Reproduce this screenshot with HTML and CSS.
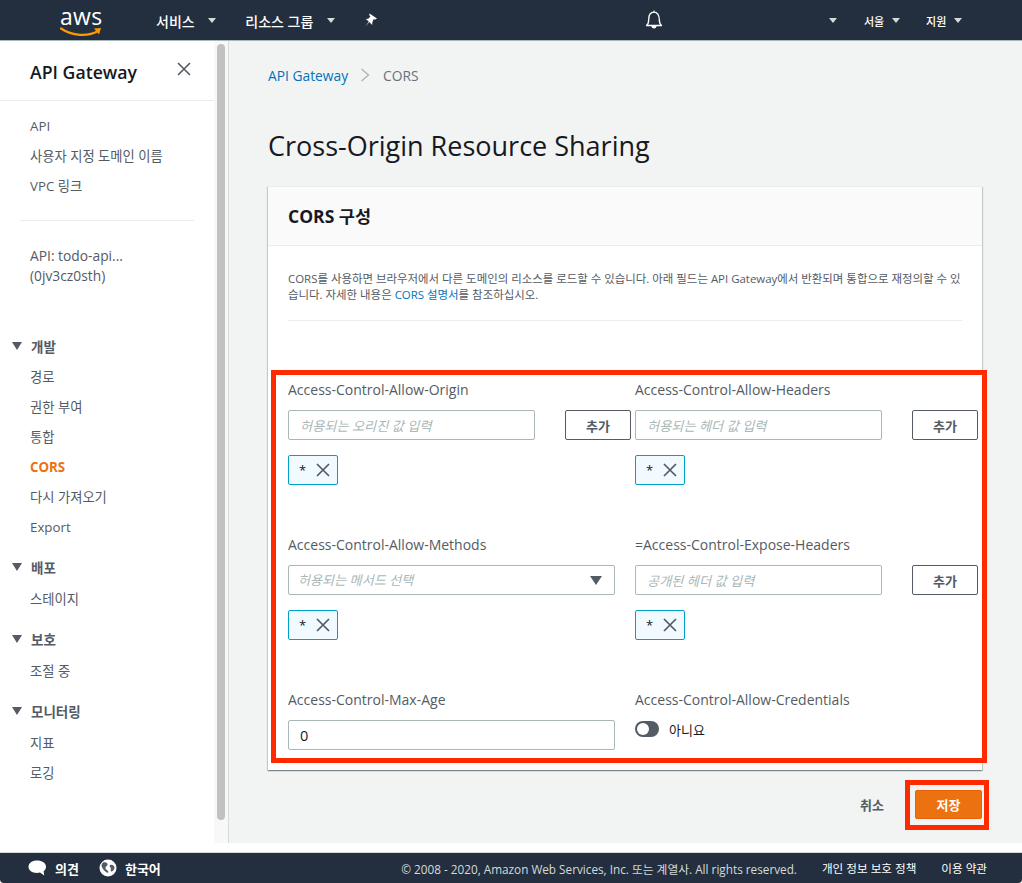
FILE: index.html
```html
<!DOCTYPE html>
<html lang="ko">

<head>
    <meta charset="utf-8">
    <title>API Gateway - CORS</title>
    <link rel="stylesheet" href="styles.css">
</head>

<body>
    <header class="topbar">
        <a class="logo">
            <span class="logo-text">aws</span>
            <svg class="logo-smile" width="42" height="10" viewBox="0 0 42 10">
                <path d="M1 1.5C12 9 28 10 38 4" fill="none" stroke="#f90" stroke-width="2.2" stroke-linecap="round" />
                <path d="M34 1.5L41 1 39 7.5Z" fill="#f90" />
            </svg>
        </a>
        <span class="top-item top-services">서비스 <i class="caret"></i></span>
        <span class="top-item top-groups">리소스 그룹 <i class="caret"></i></span>
        <svg class="pin" width="14" height="14" viewBox="0 0 14 14">
            <path d="M5.5 0.5L13 5.5 11.3 6.6 9.6 6.2 8.3 9.6 8.2 12 5.3 9 1.5 13.5 4.8 8.6 1.8 6 4.3 5.8 6.4 3.6 5.2 2Z" fill="#fff" />
        </svg>
        <svg class="bell" width="18" height="20" viewBox="0 0 18 20">
            <path d="M1.5 15.5C3.5 14 3.7 12 3.7 9.5 3.7 5.5 5.5 2.2 9 2.2S14.3 5.5 14.3 9.5C14.3 12 14.5 14 16.5 15.5Z" fill="none" stroke="#fff" stroke-width="1.3" stroke-linejoin="round" />
            <path d="M9 0.5V2.2M6.8 16.5C7 18.5 11 18.5 11.2 16.5Z" fill="#fff" stroke="#fff" stroke-width="1" />
        </svg>
        <i class="caret caret-user"></i>
        <span class="top-item top-region">서울 <i class="caret"></i></span>
        <span class="top-item top-support">지원 <i class="caret"></i></span>
    </header>

    <div class="middle">
        <nav class="sidebar">
            <div class="side-head">
                <span class="side-title">API Gateway</span>
                <svg class="side-close" width="14" height="14" viewBox="0 0 14 14">
                    <path d="M1 1L13 13M13 1L1 13" stroke="#545b64" stroke-width="1.6" fill="none" />
                </svg>
            </div>
            <ul class="side-list side-first">
                <li>API</li>
                <li>사용자 지정 도메인 이름</li>
                <li>VPC 링크</li>
            </ul>
            <div class="side-divider"></div>
            <p class="side-api">API: todo-api...<br>(0jv3cz0sth)</p>

            <h3 class="side-section side-section-dev"><i class="tri"></i>개발</h3>
            <ul class="side-list side-list-dev">
                <li>경로</li>
                <li>권한 부여</li>
                <li>통합</li>
                <li class="active">CORS</li>
                <li>다시 가져오기</li>
                <li>Export</li>
            </ul>
            <h3 class="side-section"><i class="tri"></i>배포</h3>
            <ul class="side-list">
                <li>스테이지</li>
            </ul>
            <h3 class="side-section"><i class="tri"></i>보호</h3>
            <ul class="side-list">
                <li>조절 중</li>
            </ul>
            <h3 class="side-section"><i class="tri"></i>모니터링</h3>
            <ul class="side-list">
                <li>지표</li>
                <li>로깅</li>
            </ul>
        </nav>
        <div class="scroll-track">
            <div class="scroll-thumb"></div>
        </div>

        <main class="content">
            <div class="crumbs">
                <a class="link">API Gateway</a>
                <svg class="crumb-sep" width="10" height="14" viewBox="0 0 10 14">
                    <path d="M1.5 1L8.5 7 1.5 13" fill="none" stroke="#aab7b8" stroke-width="1.4" />
                </svg>
                <span>CORS</span>
            </div>
            <h1 class="page-title">Cross-Origin Resource Sharing</h1>

            <section class="card">
                <div class="card-head">CORS 구성</div>
                <div class="card-body">
                    <p class="desc">CORS를 사용하면 브라우저에서 다른 도메인의 리소스를 로드할 수 있습니다. 아래 필드는 API Gateway에서 반환되며 통합으로 재정의할 수 있습니다. 자세한 내용은 <a class="link">CORS 설명서</a>를 참조하십시오.</p>
                    <div class="rule"></div>

                    <div class="form-grid">
                        <div class="field">
                            <label>Access-Control-Allow-Origin</label>
                            <div class="input-row">
                                <input class="text-input" type="text" placeholder="허용되는 오리진 값 입력">
                                <button class="add-btn">추가</button>
                            </div>
                            <span class="tag">* <svg width="14" height="14" viewBox="0 0 14 14"><path d="M1 1L13 13M13 1L1 13" stroke="#545b64" stroke-width="1.7" fill="none" /></svg></span>
                        </div>
                        <div class="field">
                            <label>Access-Control-Allow-Headers</label>
                            <div class="input-row">
                                <input class="text-input" type="text" placeholder="허용되는 헤더 값 입력">
                                <button class="add-btn">추가</button>
                            </div>
                            <span class="tag">* <svg width="14" height="14" viewBox="0 0 14 14"><path d="M1 1L13 13M13 1L1 13" stroke="#545b64" stroke-width="1.7" fill="none" /></svg></span>
                        </div>
                        <div class="field">
                            <label>Access-Control-Allow-Methods</label>
                            <div class="input-row">
                                <div class="select-box">허용되는 메서드 선택<i class="select-tri"></i></div>
                            </div>
                            <span class="tag">* <svg width="14" height="14" viewBox="0 0 14 14"><path d="M1 1L13 13M13 1L1 13" stroke="#545b64" stroke-width="1.7" fill="none" /></svg></span>
                        </div>
                        <div class="field">
                            <label>=Access-Control-Expose-Headers</label>
                            <div class="input-row">
                                <input class="text-input" type="text" placeholder="공개된 헤더 값 입력">
                                <button class="add-btn">추가</button>
                            </div>
                            <span class="tag">* <svg width="14" height="14" viewBox="0 0 14 14"><path d="M1 1L13 13M13 1L1 13" stroke="#545b64" stroke-width="1.7" fill="none" /></svg></span>
                        </div>
                        <div class="field field-last">
                            <label>Access-Control-Max-Age</label>
                            <div class="input-row">
                                <input class="text-input wide" type="text" value="0">
                            </div>
                        </div>
                        <div class="field field-last">
                            <label>Access-Control-Allow-Credentials</label>
                            <div class="input-row toggle-row">
                                <span class="toggle"></span>
                                <span>아니요</span>
                            </div>
                        </div>
                    </div>
                </div>
            </section>

            <div class="actions">
                <a class="cancel">취소</a>
                <button class="save-btn">저장</button>
            </div>

            <!-- red annotation boxes from the screenshot -->
            <div class="mark mark-form"></div>
            <div class="mark mark-save"></div>
        </main>
    </div>

    <footer class="footer">
        <svg class="foot-icon" width="19" height="16" viewBox="0 0 19 16">
            <path d="M9 0.5C14 0.5 18 3 18 6.7 18 9 16.8 10.5 15.6 11.3L16.3 15.5 12 12.6C11 12.8 10 12.9 9 12.9 4 12.9 0.5 10.3 0.5 6.7S4 0.5 9 0.5Z" fill="#fff" />
        </svg>
        <span class="foot-strong">의견</span>
        <svg class="foot-icon foot-globe" width="18" height="18" viewBox="0 0 18 18">
            <circle cx="9" cy="9" r="8.5" fill="#fff" />
            <path d="M4 3.5C6 3 8 3.5 8.5 5 9 7 6.5 7 6.5 9 6.5 11 9 11 9.5 13 9 14 8 14 7 13 5 11.5 3 9 2.5 7 2.5 5.5 3 4.5 4 3.5ZM11 6C13 5 15.5 6.5 15.5 8.5 15.5 11 13 13 12 12.5 11 11.5 12.5 9.5 11.5 8.5 10.5 7.5 10.5 6.5 11 6Z" fill="#545b64" />
        </svg>
        <span class="foot-strong">한국어</span>
        <span class="foot-copy">© 2008 - 2020, Amazon Web Services, Inc. 또는 계열사. All rights reserved.</span>
        <span class="foot-link">개인 정보 보호 정책</span>
        <span class="foot-link foot-terms">이용 약관</span>
    </footer>
</body>

</html>
```

FILE: styles.css
```css
* {
    box-sizing: border-box;
}

html,
body {
    margin: 0;
    height: 100%;
}

body {
    display: flex;
    flex-direction: column;
    height: 883px;
    overflow: hidden;
    background: #fff;
    color: #545b64;
    font-family: "Open Sans", "Noto Sans CJK KR", sans-serif;
    font-size: 14px;
}

/* top bar */
.topbar {
    display: flex;
    align-items: center;
    flex: 0 0 41px;
    height: 41px;
    background: #232f3e;
    border-bottom: 1px solid #aab7b8;
    color: #fff;
}

.logo {
    position: relative;
    width: 42px;
    height: 33px;
    margin-left: 60px;
}

.logo-text {
    display: block;
    font-size: 23px;
    line-height: 24px;
    text-align: center;
    letter-spacing: 0.3px;
}

.logo-smile {
    position: absolute;
    left: 0;
    top: 23px;
}

.top-item {
    display: flex;
    align-items: center;
    margin-top: 1px;
    font-weight: 500;
    white-space: pre;
}

.top-services {
    margin-left: 54px;
    font-size: 14px;
}

.top-groups {
    margin-left: 29px;
    font-size: 14px;
}

.caret {
    display: inline-block;
    width: 0;
    height: 0;
    margin-left: 10px;
    border-left: 4px solid transparent;
    border-right: 4px solid transparent;
    border-top: 5px solid #d5dbdb;
}

.pin {
    margin-left: 29px;
}

.bell {
    margin-left: 267px;
}

.caret-user {
    margin-left: 166px;
}

.top-region {
    margin-left: 27px;
    font-size: 11px;
}

.top-support {
    margin-left: 26px;
    font-size: 11px;
}

.top-region .caret,
.top-support .caret {
    margin-left: 5px;
}

/* middle row */
.middle {
    display: flex;
    flex: 0 0 802px;
    height: 802px;
}

.sidebar {
    flex: 0 0 214px;
    background: #fff;
}

.side-head {
    display: flex;
    align-items: center;
    justify-content: space-between;
    height: 60px;
    padding: 2px 23px 0 30px;
    border-bottom: 1px solid #eaeded;
}

.side-title {
    color: #16191f;
    font-size: 17.7px;
    font-weight: 600;
}

.side-close {
    margin-top: -6px;
}

.side-list {
    margin: 2px 0 0;
    padding: 0 0 0 30px;
    list-style: none;
}

.side-list li {
    height: 30px;
    line-height: 30px;
    font-size: 13.3px;
}

.side-list .active {
    color: #ec7211;
    font-weight: 700;
}

.side-first {
    margin-top: 10px;
}

.side-list-dev {
    margin-top: 1px;
}

.side-divider {
    height: 1px;
    margin: 19px 20px 0;
    background: #eaeded;
}

.side-api {
    margin: 25px 0 0 30px;
    font-size: 13.8px;
    line-height: 20px;
}

.side-section {
    display: flex;
    align-items: center;
    height: 30px;
    margin: 10px 0 0;
    padding-left: 12px;
    font-size: 13.5px;
    font-weight: 700;
}

.side-section-dev {
    margin-top: 45px;
}

.tri {
    width: 0;
    height: 0;
    margin-right: 9px;
    border-left: 5px solid transparent;
    border-right: 5px solid transparent;
    border-top: 8px solid #545b64;
}

.scroll-track {
    flex: 0 0 15px;
    padding: 3px 3px 0;
    background: #f8f8f8;
    border-right: 1px solid #d5dbdb;
}

.scroll-thumb {
    width: 8px;
    height: 776px;
    border-radius: 4px;
    background: #c1c1c1;
}

/* main column */
.content {
    position: relative;
    flex: 1;
    min-width: 0;
    padding: 0 40px 0 39px;
    background: #f2f3f3;
}

.link {
    color: #0073bb;
}

.crumbs {
    display: flex;
    align-items: center;
    height: 20px;
    margin-top: 24px;
    font-size: 13.8px;
    color: #687078;
}

.crumb-sep {
    margin: 0 13px 0 12px;
}

.page-title {
    margin: 43px 0 0;
    color: #16191f;
    font-size: 27px;
    font-weight: 400;
    line-height: 36px;
}

.card {
    height: 584px;
    margin-top: 22px;
    background: #fff;
    border-top: 1px solid #eaeded;
    box-shadow: 0 1px 1px rgba(0, 28, 36, 0.3), 1px 1px 1px rgba(0, 28, 36, 0.15), -1px 1px 1px rgba(0, 28, 36, 0.15);
}

.card-head {
    height: 59px;
    padding: 0 20px;
    background: #fafafa;
    border-bottom: 1px solid #eaeded;
    color: #16191f;
    font-size: 17.5px;
    font-weight: 700;
    line-height: 59px;
}

.card-body {
    padding: 25px 0 0 20px;
}

.desc {
    margin: 0 20px 0 0;
    font-size: 11.45px;
    line-height: 16px;
}

.rule {
    height: 1px;
    margin: 17px 20px 0 0;
    background: #eaeded;
}

.form-grid {
    display: grid;
    grid-template-columns: 347px 347px;
    margin-top: 59px;
}

.field {
    height: 155px;
}

.field-last {
    height: auto;
}

.field label {
    display: block;
    height: 20px;
    font-size: 14px;
    line-height: 20px;
}

.input-row {
    display: flex;
    height: 30px;
    margin-top: 10px;
}

.text-input {
    width: 247px;
    height: 30px;
    padding: 0 11px;
    border: 1px solid #aab7b8;
    border-radius: 2px;
    background: #fff;
    color: #16191f;
    font-family: inherit;
    font-size: 14.5px;
}

.text-input::placeholder {
    color: #aab7b8;
    font-size: 13.2px;
    font-style: italic;
    opacity: 1;
}

.wide {
    width: 327px;
}

.add-btn {
    width: 66px;
    height: 30px;
    margin-left: 30px;
    flex: none;
    border: 1px solid #545b64;
    border-radius: 2px;
    background: #fff;
    color: #545b64;
    font-family: inherit;
    font-size: 13px;
    font-weight: 700;
}

.select-box {
    position: relative;
    width: 327px;
    height: 30px;
    padding: 0 9px;
    border: 1px solid #aab7b8;
    border-radius: 2px;
    color: #aab7b8;
    font-size: 13.1px;
    font-style: italic;
    line-height: 28px;
}

.select-tri {
    position: absolute;
    right: 12px;
    top: 10px;
    width: 0;
    height: 0;
    border-left: 6px solid transparent;
    border-right: 6px solid transparent;
    border-top: 9px solid #545b64;
}

.tag {
    display: flex;
    align-items: center;
    justify-content: space-between;
    width: 50px;
    height: 30px;
    margin-top: 15px;
    padding: 0 7px 0 10px;
    border: 1px solid #00a1c9;
    border-radius: 2px;
    background: #f1faff;
    color: #16191f;
    font-size: 13px;
}

.toggle-row {
    align-items: center;
    gap: 10px;
    margin-top: 4px;
    color: #16191f;
    font-size: 13px;
}

.toggle {
    position: relative;
    display: block;
    width: 24px;
    height: 16px;
    border-radius: 8px;
    background: #545b64;
}

.toggle::after {
    content: "";
    position: absolute;
    left: 2px;
    top: 2px;
    width: 12px;
    height: 12px;
    border-radius: 50%;
    background: #fff;
}

.actions {
    display: flex;
    align-items: center;
    justify-content: flex-end;
    height: 29px;
    margin-top: 20px;
}

.cancel {
    margin-right: 31px;
    font-size: 13px;
    font-weight: 700;
}

.save-btn {
    width: 67px;
    height: 29px;
    border: 1px solid #eb5f07;
    border-radius: 2px;
    background: #ec7211;
    color: #fff;
    font-family: inherit;
    font-size: 13px;
    font-weight: 700;
}

.mark {
    position: absolute;
    border: 5px solid #ff2a00;
}

.mark-form {
    left: 42px;
    top: 329px;
    width: 716px;
    height: 393px;
}

.mark-save {
    left: 676px;
    top: 739px;
    width: 84px;
    height: 50px;
}

/* footer */
.footer {
    display: flex;
    align-items: center;
    flex: 1;
    margin-top: 9px;
    padding: 0 0 0 28px;
    background: #232f3e;
    border-top: 1px solid #d5dbdb;
    border-radius: 0 0 4px 4px;
    color: #fff;
    font-size: 11.6px;
}

.foot-strong {
    margin-left: 8px;
    font-size: 13px;
    font-weight: 700;
}

.foot-globe {
    margin-left: 20px;
}

.foot-copy {
    margin-left: auto;
    color: #d5dbdb;
    font-size: 11.75px;
}

.foot-link {
    margin-left: 25px;
}

.foot-terms {
    margin-right: 35px;
}
```
